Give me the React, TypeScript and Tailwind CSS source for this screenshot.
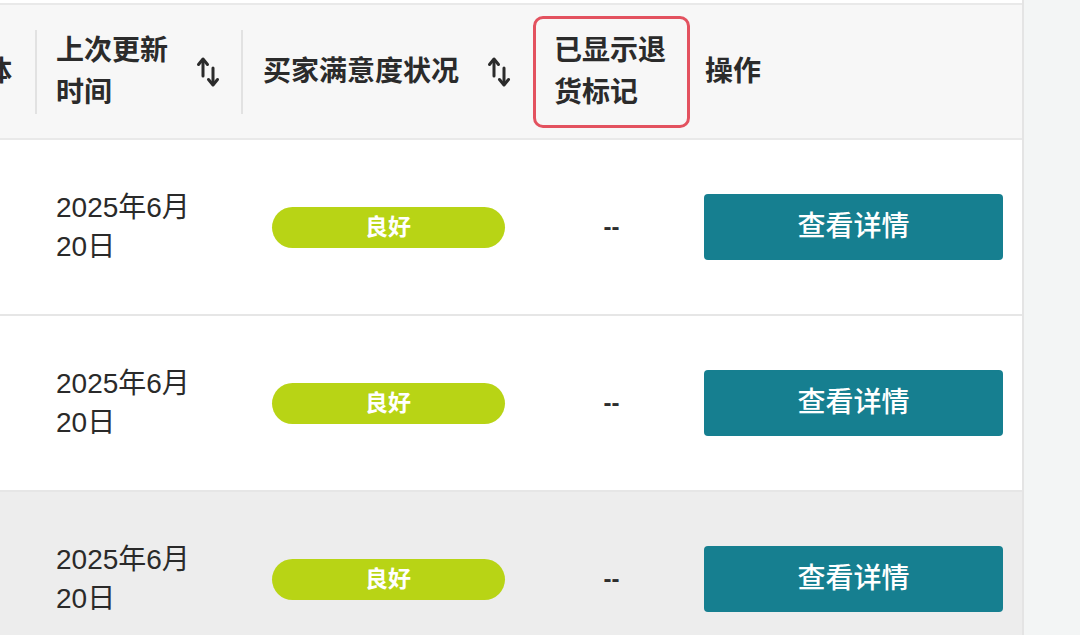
import React from 'react';

const FONT = { fontFamily: '"Liberation Sans", "Noto Sans CJK SC", sans-serif' };

function SortIcon() {
  return (
    <svg width="24" height="32" viewBox="0 0 24 32" fill="none" className="shrink-0">
      <path d="M7 20V4" stroke="#2b2b2b" strokeWidth="3" strokeLinecap="round" />
      <path d="M2.5 8.5L7 3L11.5 8.5" stroke="#2b2b2b" strokeWidth="3" strokeLinecap="round" strokeLinejoin="round" />
      <path d="M17 12V28" stroke="#2b2b2b" strokeWidth="3" strokeLinecap="round" />
      <path d="M12.5 23.5L17 29L21.5 23.5" stroke="#2b2b2b" strokeWidth="3" strokeLinecap="round" strokeLinejoin="round" />
    </svg>
  );
}

const rows = [
  { date: '2025年6月', day: '20日', status: '良好', mark: '--', hover: false },
  { date: '2025年6月', day: '20日', status: '良好', mark: '--', hover: false },
  { date: '2025年6月', day: '20日', status: '良好', mark: '--', hover: true },
];

export default function App() {
  return (
    <div className="flex h-[635px] w-[1080px] overflow-hidden bg-white" style={FONT}>
      {/* table */}
      <div className="w-[1022px] shrink-0 pt-[3px]">
        {/* header */}
        <div className="flex h-[137px] items-center border-y-2 border-[#e9e9e9] bg-[#f7f7f7] text-[28px] font-bold leading-[42px] text-[#2b2b2b]">
          <div className="flex w-[35px] items-center overflow-hidden">
            <span className="-ml-[16px]">体</span>
          </div>
          <div className="h-[84px] w-[2px] bg-[#e2e2e2]" />
          <div className="flex w-[204px] items-center justify-between pl-[19px] pr-[21px]">
            <span className="w-[118px]">上次更新时间</span>
            <SortIcon />
          </div>
          <div className="h-[84px] w-[2px] bg-[#e2e2e2]" />
          <div className="flex w-[290px] items-center gap-[28px] pl-[20px]">
            <span>买家满意度状况</span>
            <SortIcon />
          </div>
          <div className="flex h-[112px] w-[157px] items-center rounded-[10px] border-[3px] border-[#e3525f] pl-[18px]">
            <span className="w-[116px]">已显示退货标记</span>
          </div>
          <div className="pl-[15px]">操作</div>
        </div>

        {/* body */}
        {rows.map((r, i) => (
          <div
            key={i}
            className={`flex h-[176px] items-center border-b-2 border-[#e6e6e6] ${r.hover ? 'bg-[#ededed]' : 'bg-white'}`}
          >
            <div className="w-[37px]" />
            <div className="w-[206px] pl-[19px] text-[28px] leading-[39px] text-[#2a2a2a]">
              <div>{r.date}</div>
              <div>{r.day}</div>
            </div>
            <div className="flex w-[290px] justify-center">
              <span className="flex h-[41px] w-[233px] items-center justify-center rounded-full bg-[#b8d415] text-[23px] font-bold text-white">
                {r.status}
              </span>
            </div>
            <div className="flex w-[157px] justify-center text-[24px] font-bold text-[#2e2e2e]">{r.mark}</div>
            <div className="pl-[14px]">
              <button className="flex h-[66px] w-[299px] items-center justify-center rounded-[4px] bg-[#167f90] text-[28px] font-medium text-white">
                查看详情
              </button>
            </div>
          </div>
        ))}
      </div>

      {/* right side panel */}
      <div className="flex-1 border-l-2 border-[#e4e4e4] bg-[#f3f5f5]" />
    </div>
  );
}
